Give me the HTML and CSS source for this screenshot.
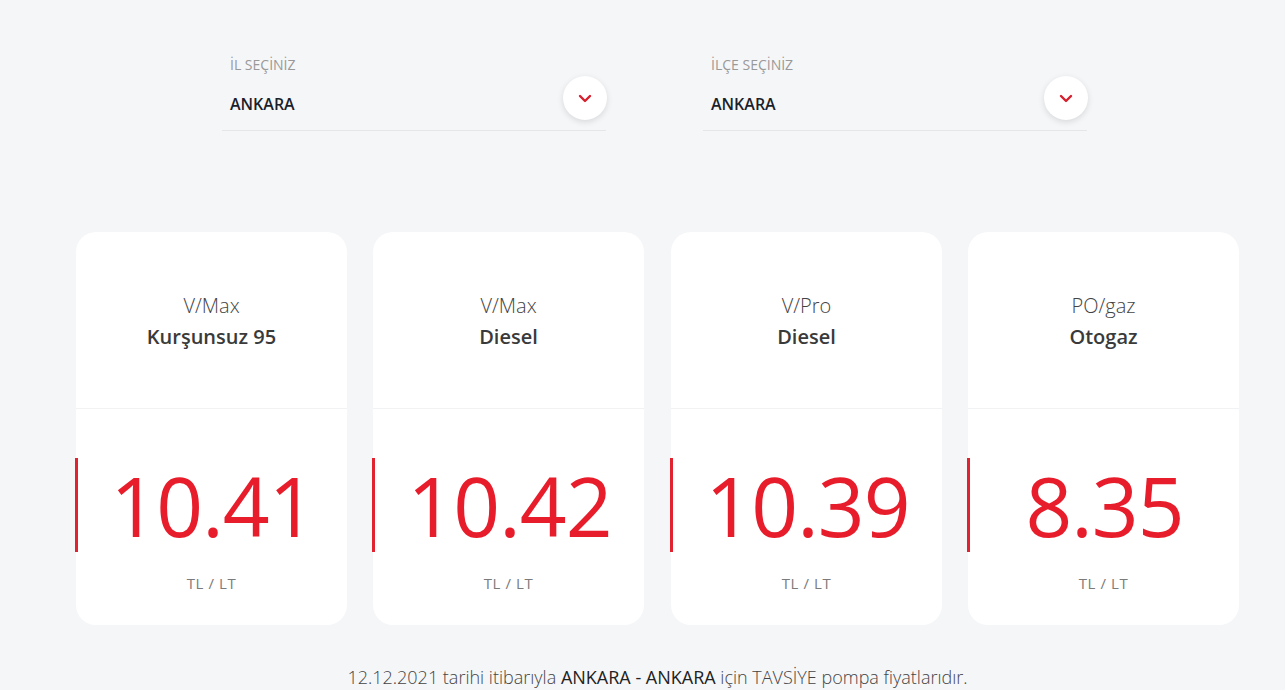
FILE: index.html
```html
<!DOCTYPE html>
<html lang="tr">
<head>
  <meta charset="UTF-8">
  <title>Akaryakıt Fiyatları</title>
  <link rel="stylesheet" href="styles.css">
</head>
<body>
  <div class="page">

    <!-- il / ilce secimi -->
    <div class="filters">
      <div class="select-box">
        <div class="select-label">İL SEÇİNİZ</div>
        <div class="select-value">ANKARA</div>
        <button class="select-btn" type="button">
          <svg width="14" height="9" viewBox="0 0 14 9"><path d="M2 2 L7 7 L12 2" fill="none" stroke="#d71f2d" stroke-width="2.4" stroke-linecap="round" stroke-linejoin="round"/></svg>
        </button>
      </div>
      <div class="select-box">
        <div class="select-label">İLÇE SEÇİNİZ</div>
        <div class="select-value">ANKARA</div>
        <button class="select-btn" type="button">
          <svg width="14" height="9" viewBox="0 0 14 9"><path d="M2 2 L7 7 L12 2" fill="none" stroke="#d71f2d" stroke-width="2.4" stroke-linecap="round" stroke-linejoin="round"/></svg>
        </button>
      </div>
    </div>

    <!-- fiyat kartlari -->
    <div class="cards">
      <div class="card">
        <div class="card-head">
          <div class="brand">V/Max</div>
          <div class="fuel">Kurşunsuz 95</div>
        </div>
        <div class="card-body">
          <div class="price">10.41</div>
          <div class="unit">TL / LT</div>
        </div>
      </div>
      <div class="card">
        <div class="card-head">
          <div class="brand">V/Max</div>
          <div class="fuel">Diesel</div>
        </div>
        <div class="card-body">
          <div class="price">10.42</div>
          <div class="unit">TL / LT</div>
        </div>
      </div>
      <div class="card">
        <div class="card-head">
          <div class="brand">V/Pro</div>
          <div class="fuel">Diesel</div>
        </div>
        <div class="card-body">
          <div class="price">10.39</div>
          <div class="unit">TL / LT</div>
        </div>
      </div>
      <div class="card">
        <div class="card-head">
          <div class="brand">PO/gaz</div>
          <div class="fuel">Otogaz</div>
        </div>
        <div class="card-body">
          <div class="price">8.35</div>
          <div class="unit">TL / LT</div>
        </div>
      </div>
    </div>

    <p class="note">12.12.2021 tarihi itibarıyla <span>ANKARA - ANKARA</span> için TAVSİYE pompa fiyatlarıdır.</p>
  </div>
</body>
</html>
```

FILE: styles.css
```css
body {
  margin: 0;
  padding: 0;
  background: #f5f6f8;
  font-family: 'Open Sans', 'Noto Sans', sans-serif;
  color: #333;
}

.page {
  width: 1163px;
  margin-left: 76px;
  padding-top: 55px;
}

.filters {
  display: flex;
  gap: 97px;
  padding-left: 146px;
}

.select-box {
  position: relative;
  width: 384px;
  height: 76px;
  border-bottom: 1px solid #e4e6e9;
  padding-left: 8px;
  box-sizing: border-box;
}

.select-label {
  font-size: 14px;
  color: #999;
  line-height: 20px;
}

.select-value {
  margin-top: 18px;
  font-size: 16px;
  font-weight: 600;
  color: #1b1f2a;
  line-height: 22px;
}

.select-btn {
  position: absolute;
  right: -1px;
  top: 21px;
  width: 44px;
  height: 44px;
  border-radius: 50%;
  border: none;
  background: #fff;
  box-shadow: 0 2px 6px rgba(0, 0, 0, 0.12);
  display: flex;
  align-items: center;
  justify-content: center;
  padding: 0;
}

.cards {
  display: flex;
  gap: 26px;
  margin-top: 101px;
}

.card {
  width: 271px;
  height: 393px;
  background: #fff;
  border-radius: 20px;
  flex-shrink: 0;
}

.card:nth-child(3) {
  margin-left: 1px;
}

.card-head {
  height: 177px;
  border-bottom: 1px solid #f1f2f4;
  display: flex;
  flex-direction: column;
  align-items: center;
  padding-top: 60px;
  box-sizing: border-box;
}

.brand {
  font-size: 20px;
  font-weight: 300;
  color: #444;
  line-height: 28px;
}

.fuel {
  font-size: 20px;
  font-weight: 600;
  color: #3a3a3a;
  line-height: 28px;
  margin-top: 3px;
}

.card-body {
  padding-top: 49px;
  text-align: center;
}

.price {
  border-left: 3px solid #e1222f;
  height: 94px;
  line-height: 94px;
  font-size: 82px;
  font-weight: 400;
  color: #e81d2b;
  letter-spacing: -1px;
  margin-left: -1px;
}

.unit {
  margin-top: 20px;
  font-size: 15px;
  color: #7b7b7b;
  line-height: 22px;
  letter-spacing: 0.6px;
}

.note {
  margin: 40px 0 0;
  text-align: center;
  font-size: 18px;
  font-weight: 300;
  color: #444;
}

.note span {
  font-weight: 400;
  color: #222;
}
```
